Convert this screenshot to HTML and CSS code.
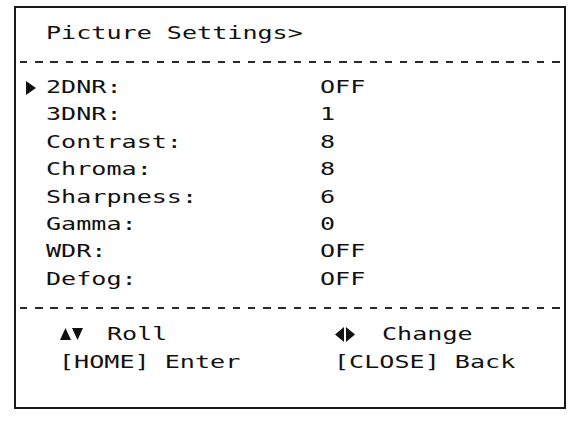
FILE: index.html
```html
<!DOCTYPE html>
<html lang="en">
<head>
<meta charset="utf-8">
<title>Picture Settings</title>
<link rel="stylesheet" href="styles.css">
</head>
<body>
<div class="osd">
  <div class="title"><span class="t">Picture Settings&gt;</span></div>
  <div class="rule"></div>
  <ul class="list">
    <li class="row"><span class="mark"><svg width="10" height="14" viewBox="0 0 10 14"><polygon points="0,0 10,7 0,14" fill="#111"/></svg></span><span class="label"><span class="t">2DNR:</span></span><span class="value"><span class="t">OFF</span></span></li>
    <li class="row"><span class="mark"></span><span class="label"><span class="t">3DNR:</span></span><span class="value"><span class="t">1</span></span></li>
    <li class="row"><span class="mark"></span><span class="label"><span class="t">Contrast:</span></span><span class="value"><span class="t">8</span></span></li>
    <li class="row"><span class="mark"></span><span class="label"><span class="t">Chroma:</span></span><span class="value"><span class="t">8</span></span></li>
    <li class="row"><span class="mark"></span><span class="label"><span class="t">Sharpness:</span></span><span class="value"><span class="t">6</span></span></li>
    <li class="row"><span class="mark"></span><span class="label"><span class="t">Gamma:</span></span><span class="value"><span class="t">0</span></span></li>
    <li class="row"><span class="mark"></span><span class="label"><span class="t">WDR:</span></span><span class="value"><span class="t">OFF</span></span></li>
    <li class="row"><span class="mark"></span><span class="label"><span class="t">Defog:</span></span><span class="value"><span class="t">OFF</span></span></li>
  </ul>
  <div class="rule"></div>
  <div class="footer">
    <div class="hint"><span class="ico"><svg width="23" height="12" viewBox="0 0 23 12"><polygon points="0,12 5.5,0 11,12" fill="#111"/><polygon points="12,0 23,0 17.5,12" fill="#111"/></svg></span><span class="t">Roll</span></div>
    <div class="hint"><span class="ico"><svg width="20" height="15" viewBox="0 0 20 15"><polygon points="9,0 9,15 0,7.5" fill="#111"/><polygon points="11,0 20,7.5 11,15" fill="#111"/></svg></span><span class="t">Change</span></div>
    <div class="hint"><span class="t">[HOME] Enter</span></div>
    <div class="hint"><span class="t">[CLOSE] Back</span></div>
  </div>
</div>
</body>
</html>
```
FILE: styles.css
```css
html, body {
  margin: 0;
  padding: 0;
  background: #ffffff;
}

body {
  font-family: "DejaVu Sans Mono", "Liberation Mono", monospace;
  font-size: 17px;
  color: #111111;
}

.osd {
  margin: 6px 0 0 14px;
  width: 548px;
  height: 399px;
  border: 2px solid #1a1a1a;
}

.t {
  display: inline-block;
  white-space: pre;
  transform: scaleX(1.476);
  transform-origin: 0 50%;
}

.title {
  padding: 12px 0 0 30px;
  height: 27px;
  line-height: 27px;
}

.rule {
  height: 2px;
  width: 540px;
  margin: 14px 0 0 4px;
  background: repeating-linear-gradient(90deg, #2a2a2a 0 7.5px, transparent 7.5px 15.2px);
}

.list {
  list-style: none;
  margin: 0;
  padding: 11px 0 0 0;
}

.row {
  display: grid;
  grid-template-columns: 30px 274px 1fr;
  align-items: center;
  height: 27.4px;
  line-height: 27.4px;
}

.mark {
  display: flex;
  align-items: center;
  padding-left: 10px;
}

.mark svg {
  display: block;
}

.footer {
  display: grid;
  grid-template-columns: 275px 1fr;
  padding: 11px 0 0 43px;
}

.hint {
  display: flex;
  align-items: center;
  height: 28px;
  line-height: 28px;
}

.ico {
  display: flex;
  align-items: center;
  width: 47px;
  padding-left: 1px;
}

.ico svg {
  display: block;
}
```
